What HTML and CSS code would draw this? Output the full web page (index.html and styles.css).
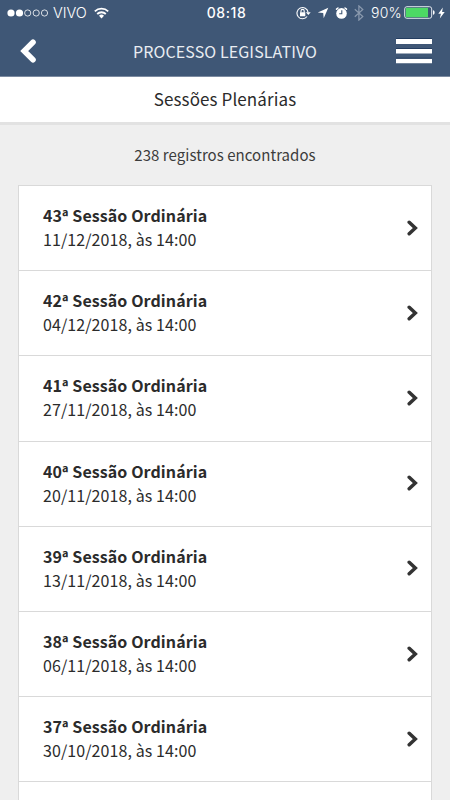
FILE: index.html
```html
<!DOCTYPE html>
<html lang="pt-BR">
<head>
<meta charset="utf-8">
<title>Processo Legislativo</title>
<link rel="stylesheet" href="styles.css">
</head>
<body>
<header class="top">
  <div class="status">
    <div class="status-left">
      <svg class="signal" width="42" height="10" viewBox="0 0 42 10"><g fill="#fff"><circle cx="4" cy="5" r="3.6"/><circle cx="12.5" cy="5" r="3.6"/></g><g fill="none" stroke="#fff" stroke-width=".8"><circle cx="20.7" cy="5" r="3.1"/><circle cx="29.2" cy="5" r="3.1"/><circle cx="37.5" cy="5" r="3.1"/></g></svg>
      <span class="carrier">VIVO</span>
      <svg class="wifi" width="15" height="12" viewBox="0 0 15 12"><g fill="none" stroke="#fff" stroke-width="1.8"><path d="M.8 4.4a9.6 9.6 0 0 1 13.4 0"/><path d="M3.2 7a6.1 6.1 0 0 1 8.6 0"/></g><path fill="#fff" d="M5 8.7a3.6 3.6 0 0 1 5 0L7.5 11.4z"/></svg>
    </div>
    <span class="clock">08:18</span>
    <div class="status-right">
      <svg width="15" height="14" viewBox="0 0 15 14"><g fill="none" stroke="#fff" stroke-width="1.1"><path d="M11.1 10.5A5.6 5.6 0 1 1 12.1 6.3"/><path d="M5 6.5V5a1.6 1.6 0 0 1 3.2 0v1.5"/></g><path fill="#fff" d="M4 6.2h5.3v4H4zM9.9 6.2h4.8l-2.4 2.9z"/></svg>
      <svg class="arrow" width="12" height="12" viewBox="0 0 12 12"><path fill="#fff" d="M11.3.8 6.7 11.2 6.2 6 .8 5.4z"/></svg>
      <svg class="alarm" width="13" height="14" viewBox="0 0 13 14"><circle cx="6.5" cy="7.4" r="5.3" fill="#fff"/><path d="M1.5 3.2 3 2M10 2l1.5 1.2" stroke="#fff" stroke-width="1.5" stroke-linecap="round"/><path d="M6.8 4.3v3.4H4.2" fill="none" stroke="#3f5776" stroke-width="1.1"/></svg>
      <svg class="bluetooth" width="10" height="16" viewBox="0 0 10 16"><path d="m.8 4.3 8 7.2-3.9 3.6V.9l3.9 3.6-8 7.2" fill="none" stroke="#8b9aae" stroke-width="1.2"/></svg>
      <span class="percent">90%</span>
      <svg class="battery" width="31" height="13" viewBox="0 0 31 13"><rect x=".7" y=".7" width="27" height="11.6" rx="2.2" fill="#3b5273" stroke="#e3e8ee" stroke-width="1"/><path fill="#4cd964" d="M1.8 1.8H24v9.4H1.8z"/><path fill="#fff" d="M29 4.3c2.2.5 2.2 4 0 4.5z"/></svg>
      <svg class="bolt" width="7" height="12" viewBox="0 0 7 12"><path fill="#fff" d="M4.8.5.3 6.7h2.6L1.8 11.5 6.7 4.9H4.1z"/></svg>
    </div>
  </div>
  <div class="nav">
    <svg class="back" width="16" height="24" viewBox="0 0 16 24"><path d="M13 3.2 4.2 12l8.8 8.8" fill="none" stroke="#fff" stroke-width="5.6" stroke-linecap="round"/></svg>
    <h1 class="title">PROCESSO LEGISLATIVO</h1>
    <svg class="menu" width="36" height="26" viewBox="0 0 36 26"><path fill="#fff" d="M0 1h36v5H0zM0 11h36v4.5H0zM0 20.7h36v4.6H0z"/><path stroke="#253e61" d="M0 .5h36M0 10.5h36M0 20.2h36"/></svg>
  </div>
</header>
<h2 class="section">Sessões Plenárias</h2>
<p class="count"><span>238 registros encontrados</span></p>
<ul class="list" id="list"></ul>
<script src="script.js"></script>
</body>
</html>
```
FILE: styles.css
```css
* { box-sizing: border-box; }
body {
  display: flex;
  flex-direction: column;
  margin: 0;
  height: 800px;
  overflow: hidden;
  background: #efefef;
  color: #2b2b2b;
  font-family: "Noto Sans CJK SC", "Noto Sans", sans-serif;
}
svg { display: block; flex: none; }
h1, h2, p, ul { margin: 0; padding: 0; font-weight: 400; }
.top { flex: none; height: 77px; background: #3f5776; color: #fff; border-bottom: 1px solid #7c8ba1; }
.status { display: grid; grid-template-columns: 1fr auto 1fr; height: 25px; align-items: center; font-family: Inter, "Liberation Sans", sans-serif; font-size: 14px; }
.status-left { display: flex; align-items: center; padding-left: 7px; }
.carrier { margin-left: 4px; font-size: 14.5px; font-weight: 300; }
.wifi { margin-left: 7px; }
.clock { margin-left: 3px; font-weight: 500; font-size: 14px; letter-spacing: .6px; }
.status-right { display: flex; align-items: center; justify-content: flex-end; padding-right: 5px; }
.arrow { margin-left: 6px; }
.alarm { margin-left: 6px; }
.bluetooth { margin-left: 6px; }
.percent { margin: 0 2px 0 7px; font-size: 14px; font-weight: 300; letter-spacing: .3px; }
.bolt { margin-left: 3px; }
.nav { display: grid; grid-template-columns: 1fr auto 1fr; height: 51px; align-items: center; padding: 0 18px 0 20px; }
.menu { justify-self: end; }
.title { margin-left: -2px; color: #e9edf2; font-size: 16px; line-height: 24px; letter-spacing: .1px; }
.section { flex: none; height: 48px; background: #fff; border-bottom: 3px solid #e2e2e2; font-size: 17px; line-height: 43px; text-align: center; letter-spacing: .1px; }
.count { flex: none; height: 60px; color: #3c3c3c; font-size: 15px; line-height: 60px; text-align: center; letter-spacing: .05px; }
.list { flex: 1; margin: 0 18px; border: 1px solid #d9d9d9; border-bottom: 0; background: #fff; list-style: none; }
.row { display: flex; height: 85.2px; align-items: center; justify-content: space-between; padding: 0 12px 2px 24px; border-bottom: 1px solid #d9d9d9; font-size: 16px; line-height: 24px; letter-spacing: .09px; }
.name { display: block; font-weight: 700; }
.ordinal { position: relative; top: 1px; }
.date { display: block; }
.chevron { margin-top: 1px; }
```
FILE: script.js
```js
const sessions = [
  [43, "11/12/2018"], [42, "04/12/2018"], [41, "27/11/2018"], [40, "20/11/2018"],
  [39, "13/11/2018"], [38, "06/11/2018"], [37, "30/10/2018"]
];
document.getElementById("list").innerHTML = sessions.map(([n, date]) => `
  <li class="row">
    <div><span class="name">${n}<span class="ordinal">ª</span> Sessão Ordinária</span><span class="date">${date}, às 14:00</span></div>
    <svg class="chevron" width="12" height="18" viewBox="0 0 12 18"><path d="M2.2 3.3 8.3 9l-6.1 5.7" fill="none" stroke="#333" stroke-width="3.5" stroke-linecap="round"/></svg>
  </li>`).join("");
```
